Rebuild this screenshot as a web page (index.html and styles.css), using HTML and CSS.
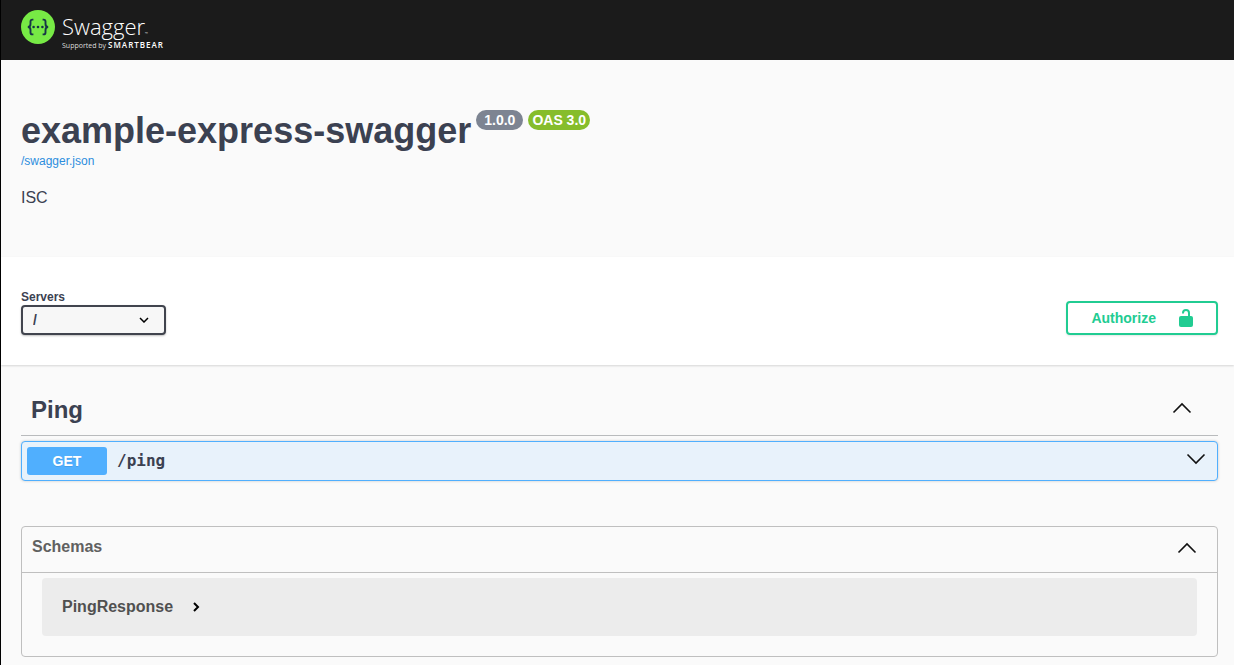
FILE: index.html
```html
<!DOCTYPE html>
<html lang="en">
<head>
<meta charset="utf-8">
<meta name="viewport" content="width=device-width, initial-scale=1">
<title>Swagger UI</title>
<link rel="stylesheet" href="styles.css">
</head>
<body>
<header class="topbar">
  <a class="logo" href="#">
    <svg class="logo-mark" viewBox="0 0 34 34" aria-hidden="true">
      <circle cx="17" cy="17" r="17" fill="#77ea45"/>
      <g fill="none" stroke="#173647" stroke-width="1.900">
        <path d="M12.400 9.600h-1q-1.900 0-1.900 2v2.400q0 3-2.700 3q2.700 0 2.700 3v2.400q0 2 1.900 2h1"/>
        <path d="M21.600 9.600h1q1.900 0 1.900 2v2.400q0 3 2.700 3q-2.700 0-2.700 3v2.400q0 2-1.900 2h-1"/>
      </g>
      <g fill="#173647"><circle cx="12.600" cy="17" r="1.300"/><circle cx="17" cy="17" r="1.300"/><circle cx="21.400" cy="17" r="1.300"/></g>
    </svg>
    <span class="logo-text">
      <span class="logo-name">Swagger<span class="logo-dot">™</span></span>
      <span class="logo-by">Supported by <b>SMARTBEAR</b></span>
    </span>
  </a>
</header>
<main>
  <section class="info">
    <div class="title-row">
      <h1 class="title">example-express-swagger</h1>
      <span class="badge">1.0.0</span>
      <span class="badge badge-oas">OAS 3.0</span>
    </div>
    <a class="spec-link" href="#">/swagger.json</a>
    <p class="description">ISC</p>
  </section>
  <section class="schemes">
    <div class="servers">
      <label class="servers-label" for="servers">Servers</label>
      <select class="servers-select" id="servers"><option>/</option></select>
    </div>
    <button class="authorize" type="button">
      <span>Authorize</span>
      <svg class="lock" viewBox="0 0 14 18" aria-hidden="true">
        <rect x="0" y="7" width="14" height="11" rx="2" fill="#21cc92"/>
        <path d="M4 4.500V4q0-3 3-3t3 3v4" fill="none" stroke="#21cc92" stroke-width="2"/>
      </svg>
    </button>
  </section>
  <section class="operations">
    <button class="tag" type="button">
      <span class="tag-name">Ping</span>
      <svg class="arrow" viewBox="0 0 20 20" aria-hidden="true"><path d="M1.500 12.500L10 4l8.500 8.500"/></svg>
    </button>
    <button class="operation" type="button">
      <span class="method">GET</span>
      <span class="path">/ping</span>
      <svg class="arrow" viewBox="0 0 20 20" aria-hidden="true"><path d="M1.500 3.500L10 12l8.500-8.500"/></svg>
    </button>
  </section>
  <section class="schemas">
    <button class="schemas-head" type="button">
      <span>Schemas</span>
      <svg class="arrow" viewBox="0 0 20 20" aria-hidden="true"><path d="M1.500 15.500L10 7l8.500 8.500"/></svg>
    </button>
    <div class="schemas-body">
      <button class="model" type="button">
        <span>PingResponse</span>
        <svg class="chevron" viewBox="0 0 8 10" aria-hidden="true"><path d="M2 1l4 4-4 4"/></svg>
      </button>
    </div>
  </section>
</main>
</body>
</html>
```
FILE: styles.css
```css
* { box-sizing: border-box; }

body {
  margin: 0;
  border-left: 1px solid #000;
  background: #fafafa;
  color: #3b4151;
  font-family: "Liberation Sans", Arial, sans-serif;
}

button {
  margin: 0;
  border: 0;
  background: none;
  color: inherit;
  font: inherit;
  text-align: left;
  cursor: pointer;
}

/* Top bar */
.topbar {
  height: 60px;
  padding: 10px 20px;
  background: #1b1b1b;
}
.logo {
  display: flex;
  gap: 7px;
  color: #fff;
  font-family: "Open Sans", sans-serif;
  text-decoration: none;
}
.logo-mark { width: 34px; height: 34px; }
.logo-text { display: flex; flex-direction: column; }
.logo-name {
  height: 31px;
  font-size: 22px;
  font-weight: 300;
  line-height: 33px;
}
.logo-dot { font-size: 4px; line-height: 1; }
.logo-by {
  display: flex;
  align-items: baseline;
  gap: 2px;
  color: #ddd;
  font-size: 6px;
  line-height: 8px;
  white-space: nowrap;
}
.logo-by { font-size: 7px; }
.logo-by b { color: #fff; font-size: 8px; font-weight: 600; letter-spacing: 1px; }

/* API information */
.info { padding: 50px 16px 50px 20px; }
.title-row { display: flex; align-items: flex-start; gap: 5px; }
.title { margin: 0; font-size: 36px; line-height: 42px; }
.badge {
  padding: 2px 8px;
  border-radius: 20px;
  background: #7d8492;
  color: #fff;
  font-size: 14px;
  font-weight: 700;
  line-height: 16px;
}
.badge-oas { padding: 2px 4px; background: #86bd2b; }
.spec-link {
  display: block;
  width: fit-content;
  color: #2c8ddd;
  font-size: 12px;
  line-height: 18px;
  text-decoration: none;
}
.description { margin: 18px 0 0; font-size: 16px; line-height: 19px; }

/* Servers and authorization */
.schemes {
  display: flex;
  align-items: center;
  justify-content: space-between;
  padding: 32px 16px 30px 20px;
  background: #fff;
  box-shadow: 0 1px 2px rgba(0, 0, 0, .15);
}
.servers { display: flex; flex-direction: column; }
.servers-label { font-size: 12px; font-weight: 700; line-height: 16px; }
.servers-select {
  width: 145px;
  height: 30px;
  padding: 0 10px;
  appearance: none;
  border: 2px solid #41444e;
  border-radius: 4px;
  background: #f7f7f7 url('data:image/svg+xml,<svg xmlns="http://www.w3.org/2000/svg" viewBox="0 0 10 6"><path d="M1 1l4 4 4-4" fill="none" stroke="black" stroke-width="1.500"/></svg>') no-repeat right 15px center / 10px 6px;
  box-shadow: 0 1px 2px rgba(0, 0, 0, .25);
  color: #3b4151;
  font: bold 14px "Liberation Sans", Arial, sans-serif;
}
.authorize {
  display: flex;
  align-items: center;
  align-self: flex-end;
  gap: 23px;
  height: 34px;
  padding: 0 23px;
  border: 2px solid #21cc92;
  border-radius: 4px;
  box-shadow: 0 1px 2px rgba(0, 0, 0, .1);
  color: #21cc92;
  font-size: 14px;
  font-weight: 700;
  line-height: 18px;
}
.lock { width: 14px; height: 18px; }

/* Operations */
.operations { padding: 20px 16px 0 20px; }
.arrow {
  width: 20px;
  height: 20px;
  margin-left: auto;
  fill: none;
  stroke: #111;
  stroke-width: 1.6;
}
.tag {
  display: flex;
  align-items: center;
  width: 100%;
  height: 51px;
  margin-bottom: 5px;
  padding: 0 26px 0 10px;
  border-bottom: 1px solid #b9bbbd;
}
.tag-name { font-size: 24px; font-weight: 700; }
.operation {
  display: flex;
  align-items: center;
  width: 100%;
  height: 40px;
  padding: 0 11px 0 5px;
  border: 1px solid #50affe;
  border-radius: 4px;
  background: #e8f2fb;
  box-shadow: 0 0 3px rgba(0, 0, 0, .2);
}
.method {
  width: 80px;
  border-radius: 3px;
  background: #50affe;
  color: #fff;
  font-size: 14px;
  font-weight: 700;
  line-height: 28px;
  text-align: center;
  text-shadow: 0 1px 0 rgba(0, 0, 0, .1);
}
.path {
  margin-left: 10px;
  font: bold 16px/20px "DejaVu Sans Mono", monospace;
}

/* Schemas */
.schemas {
  margin: 45px 16px 8px 20px;
  border: 1px solid #bfbfbf;
  border-radius: 4px;
  color: #606060;
  font-size: 16px;
  font-weight: 700;
}
.schemas-head {
  display: flex;
  align-items: center;
  width: 100%;
  height: 46px;
  padding: 0 20px 5px 10px;
  border-bottom: 1px solid #bfbfbf;
}
.schemas-body { padding: 5px 20px 20px; }
.model {
  display: flex;
  align-items: center;
  gap: 19px;
  width: 100%;
  height: 58px;
  padding: 0 20px;
  border-radius: 4px;
  background: #ececec;
  color: #505050;
}
.chevron {
  width: 8px;
  height: 10px;
  fill: none;
  stroke: #000;
  stroke-width: 2;
}
```
